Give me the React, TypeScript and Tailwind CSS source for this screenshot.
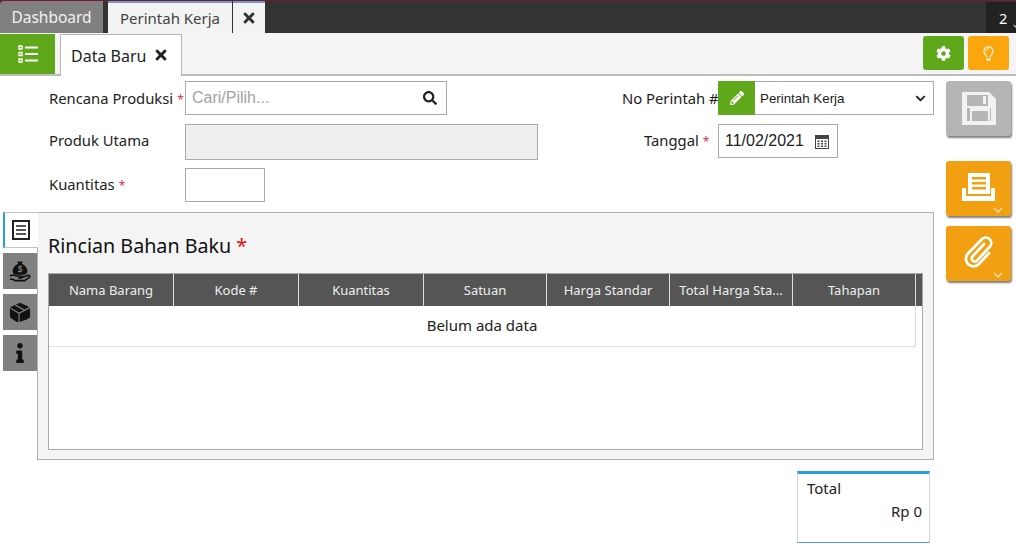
import { FaTimes, FaSearch, FaPencilAlt, FaCog, FaRegLightbulb, FaInfo, FaChevronDown } from "react-icons/fa";

const uiFont = "font-['Noto_Sans',sans-serif]";

const columns = [
  { name: "Nama Barang", width: "w-[125px]" },
  { name: "Kode #", width: "w-[125px]" },
  { name: "Kuantitas", width: "w-[125px]" },
  { name: "Satuan", width: "w-[123px]" },
  { name: "Harga Standar", width: "w-[123px]" },
  { name: "Total Harga Sta...", width: "w-[123px]" },
  { name: "Tahapan", width: "w-[123px]" },
];

function Star({ className = "" }: { className?: string }) {
  return <span className={"text-[#d9334f] " + className}>*</span>;
}

function Label({ children, required, className = "" }: { children: string; required?: boolean; className?: string }) {
  return (
    <div className={"text-[14.800px] text-[#222] whitespace-nowrap " + className}>
      {children}
      {required && <Star className="ml-[4px] text-[12px]" />}
    </div>
  );
}

function SmallChevron() {
  return (
    <svg className="absolute right-[8px] bottom-[3px]" width="10" height="6" viewBox="0 0 10 6" fill="none" stroke="#fbe3b5" strokeWidth="1.400">
      <path d="M1 1l4 4 4-4" />
    </svg>
  );
}

export default function App() {
  return (
    <div className={"w-[1016px] h-[550px] overflow-hidden bg-white relative " + uiFont}>
      {/* Top tabs */}
      <div className="h-[33px] bg-[#333333] border-t border-[#7a1a30] flex items-end">
        <div className="w-[103px] h-[32px] pt-[2px] bg-[#808080] text-[#f2f2f2] text-[15.500px] flex items-center justify-center rounded-tl-sm">Dashboard</div>
        <div className="ml-[5px] w-[124px] h-[32px] bg-[#f3f3f3] border-t-2 border-[#6b9ac9] text-[#444] text-[15px] flex items-center justify-center">Perintah Kerja</div>
        <div className="ml-px w-[32px] h-[32px] bg-[#f3f3f3] border-t-2 border-[#6b9ac9] text-[#333] flex items-center justify-center">
          <FaTimes className="text-[16px]" />
        </div>
        <div className="ml-auto w-[30px] h-[31px] bg-[#222222] text-white text-[14.500px] pl-[13px] pt-[6px] relative overflow-hidden">
          2
          <FaChevronDown className="absolute left-[27px] top-[21px] text-[7px] text-[#dddddd]" />
        </div>
      </div>

      {/* Sub toolbar */}
      <div className="h-[43px] bg-[#f4f4f4] border-b-2 border-[#bdbdbd] flex items-end">
        <div className="w-[55px] h-[40px] bg-[#5fa81a] flex items-center justify-center">
          <svg width="20" height="18" viewBox="0 0 20 18" fill="none" stroke="white">
            <path strokeWidth="1.300" d="M1 1h3v3H1zM1 7.500h3v3H1zM1 14h3v3H1z" />
            <path strokeWidth="2" d="M7 2.500h13M7 9h13M7 15.500h13" />
          </svg>
        </div>
        <div className="ml-[5px] w-[122px] h-[42px] -mb-[2px] bg-white border border-b-0 border-[#b5b5b5] flex items-center pl-[10px] text-[16px] text-[#222]">
          Data Baru
          <FaTimes className="ml-[7px] text-[16px] text-[#222] -mt-[1px]" />
        </div>
        <div className="ml-auto flex gap-1 pr-[7px] pb-[4px]">
          <div className="w-[41px] h-[34px] rounded-[3px] bg-[#5fa81a] text-white flex items-center justify-center">
            <FaCog className="text-[15px]" />
          </div>
          <div className="w-[41px] h-[34px] rounded-[3px] bg-[#fba60d] text-[#fde9c0] flex items-center justify-center">
            <FaRegLightbulb className="text-[15px]" />
          </div>
        </div>
      </div>

      <div className="flex">
        <div className="w-[934px]">
          {/* Form */}
          <div className="h-[136px] flex pt-[5px]">
            <div className="w-[618px] pl-[49px]">
              <div className="h-[34px] flex items-center">
                <Label required className="w-[136px]">Rencana Produksi</Label>
                <div className="w-[262px] h-[34px] border border-[#aaaaaa] flex items-center pl-[6px] pr-[9px] justify-between font-['Liberation_Sans',sans-serif] text-[16px] text-[#a3a3a3]">
                  Cari/Pilih...
                  <FaSearch className="text-[14px] text-[#222]" />
                </div>
              </div>
              <div className="h-[36px] mt-[9px] flex items-center">
                <Label className="w-[136px] -mt-[4px]">Produk Utama</Label>
                <div className="w-[353px] h-[36px] border border-[#aaaaaa] bg-[#eeeeee]" />
              </div>
              <div className="h-[34px] mt-[8px] flex items-center">
                <Label required className="w-[136px] -mt-[2px]">Kuantitas</Label>
                <div className="w-[80px] h-[34px] border border-[#aaaaaa]" />
              </div>
            </div>
            <div className="flex-1">
              <div className="h-[34px] flex items-center">
                <Label className="w-[100px] pl-[4px]">No Perintah #</Label>
                <div className="w-[216px] h-[34px] border border-[#aaaaaa] flex items-center font-['Liberation_Sans',sans-serif] text-[13.330px] text-[#222]">
                  <div className="w-[37px] h-[34px] -ml-px bg-[#5fa81a] rounded-l-[2px] flex items-center justify-center text-white">
                    <FaPencilAlt className="text-[14px]" />
                  </div>
                  <span className="ml-[5px] mt-px">Perintah Kerja</span>
                  <FaChevronDown className="ml-auto mr-[7px] text-[11px]" />
                </div>
              </div>
              <div className="h-[34px] mt-[9px] flex items-center">
                <Label required className="w-[100px] pl-[26px] -mt-[2px]">Tanggal</Label>
                <div className="w-[120px] h-[34px] border border-[#aaaaaa] flex items-center pl-[6px] font-['Liberation_Sans',sans-serif] text-[16px] text-[#222]">
                  11/02/2021
                  <svg className="ml-[11px]" width="14" height="15" viewBox="0 0 14 15" fill="#444">
                    <path fillRule="evenodd" d="M0 1h14v14H0zM1 5v9h12V5z" />
                    <path d="M2.500 6.500h2v1.500h-2zM6 6.500h2v1.500H6zM9.500 6.500h2v1.500h-2zM2.500 9h2v1.500h-2zM6 9h2v1.500H6zM9.500 9h2v1.500h-2zM2.500 11.500h2V13h-2zM6 11.500h2V13H6zM9.500 11.500h2V13h-2z" />
                  </svg>
                </div>
              </div>
            </div>
          </div>

          <div className="flex">
            {/* Side tabs */}
            <div className="w-[37px] pl-[3px] flex flex-col gap-[5px]">
              <div className="w-[35px] h-[36px] -mr-px relative z-10 bg-white border-l-2 border-l-[#2a9fd0] border-y border-y-[#c4c4c4] flex items-center justify-center pr-[1px]">
                <svg width="18" height="20" viewBox="0 0 18 20" fill="none" stroke="#222" strokeWidth="2">
                  <rect x="1" y="1" width="16" height="18" />
                  <path strokeWidth="1.600" d="M4 6h10M4 10h10M4 14h10" />
                </svg>
              </div>
              <div className="h-[36px] bg-[#808080] flex items-center justify-center">
                <svg width="22" height="22" viewBox="0 0 24 24">
                  <path fill="#111" d="M9 1.500h6l-1 2.500c3.500 1.500 6 4.500 6 8 0 2.500-1.500 4-4 4H8c-2.500 0-4-1.500-4-4 0-3.500 2.500-6.500 6-8z" />
                  <text x="12" y="13.500" textAnchor="middle" fontSize="9" fill="#9a9a9a" fontFamily="Liberation Sans, sans-serif">$</text>
                  <path fill="none" stroke="#111" strokeWidth="1.700" d="M1 17.500c2-1.500 4.500-1.500 7 0h5.500c1.300 0 1.300 2 0 2H10M14 19l6-2c2.500-.7 3.500 .8 2 2l-5 3.500H7l-3-1.500H1" />
                </svg>
              </div>
              <div className="h-[36px] bg-[#808080] flex items-center justify-center">
                <svg width="22" height="22" viewBox="0 0 24 24">
                  <path fill="#111" d="M12 2l8 3.500Q23 7 23 10v6q0 2.500-2.500 3.500l-8 3q-2.500 1-4.500 0l-4-2.500Q1 18.500 1 16V9q0-2 2-3z" />
                  <path fill="none" stroke="#808080" strokeWidth="1.300" d="M2 8l9 5.500 11-6M11 13.500V23M7 4.500l10 5.500" />
                </svg>
              </div>
              <div className="h-[36px] bg-[#808080] flex items-center justify-center">
                <FaInfo className="text-[20px] text-[#111]" />
              </div>
            </div>

            {/* Panel */}
            <div className="w-[897px] h-[248px] bg-[#f4f4f4] border border-[#b0b0b0] pl-[10px] pr-[10px]">
              <div className="h-[60px] flex items-center text-[19.700px] text-[#111] pt-[6px]">
                Rincian Bahan Baku
                <Star className="ml-[5px] text-[#e01010]" />
              </div>
              <div className="h-[177px] bg-white border border-[#a8a8a8]">
                <div className="h-[32px] bg-[#555555] flex">
                  {columns.map((col) => (
                    <div key={col.name} className={col.width + " pt-[2px] flex items-center justify-center text-[13px] text-[#eeeeee] whitespace-nowrap border-r border-[#dddddd]"}>
                      {col.name}
                    </div>
                  ))}
                </div>
                <div className="w-[867px] h-[41px] pb-[2px] border-b border-b-[#e2e2e2] border-r border-r-[#bbbbbb] [border-right-style:dotted] flex items-center justify-center text-[15px] text-[#222]">
                  Belum ada data
                </div>
              </div>
            </div>
          </div>

          {/* Total */}
          <div className="mt-[11px] ml-[797px] w-[133px] h-[72px] border-t-[3px] border-t-[#2a9fd0] border-x border-x-[#d5d5d5] border-b border-b-[#4a9fc5] pl-[9px] pr-[7px] pt-[3px] text-[15px] text-[#222]">
            <div>Total</div>
            <div className="text-right">Rp 0</div>
          </div>
        </div>

        {/* Action column */}
        <div className="pl-[12px] pt-[5px] flex flex-col">
          <div className="w-[65px] h-[55px] rounded-[3px] bg-[#b5b5b5] shadow-[1px_2px_2px_rgba(0,0,0,0.5)] flex items-center justify-center">
            <svg width="34" height="33" viewBox="0 0 34 33" fill="#f2f2f2">
              <path fillRule="evenodd" d="M0 0h27l7 7v26H0zM5 3v11h21V3zM5 16v13h3V16zM10 19v10h16V19zM28 16v13h1V16z" />
              <path d="M21 4h3v8h-3z" />
            </svg>
          </div>
          <div className="relative mt-[25px] w-[65px] h-[55px] rounded-[3px] bg-[#f0a010] shadow-[1px_2px_2px_rgba(0,0,0,0.5)] flex items-center justify-center pb-[3px]">
            <svg width="33" height="28" viewBox="0 0 33 28" fill="white">
              <path fillRule="evenodd" d="M6 0h22v21H6zM10 4v2.500h14V4zM10 9v2.500h14V9zM10 14v2.500h14V14z" />
              <path d="M0 15h4v8h25v-8h4v13H0z" />
            </svg>
            <SmallChevron />
          </div>
          <div className="relative mt-[10px] w-[65px] h-[55px] rounded-[3px] bg-[#f0a010] shadow-[1px_2px_2px_rgba(0,0,0,0.5)] flex items-center justify-center pb-[3px]">
            <svg width="32" height="32" viewBox="0 0 32 32" fill="none" stroke="white" strokeWidth="2.800" strokeLinecap="round">
              <path d="M21 8L9.500 20.500a3 3 0 0 0 4.500 4L27 10.500a5.500 5.500 0 0 0-8-7.500L5 17.500a7.500 7.500 0 0 0 11 10.500L26 17" />
            </svg>
            <SmallChevron />
          </div>
        </div>
      </div>
    </div>
  );
}
